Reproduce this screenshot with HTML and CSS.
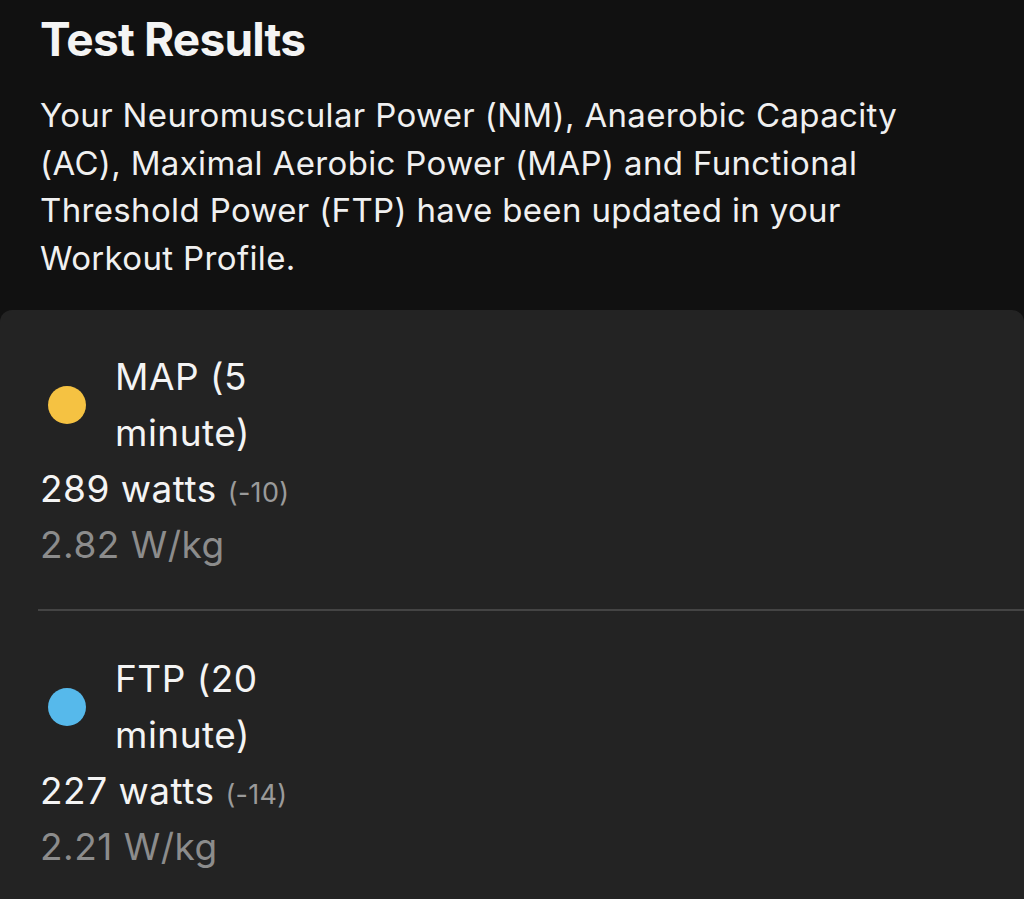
FILE: index.html
```html
<!DOCTYPE html>
<html>
<head>
<meta charset="utf-8">
<link rel="stylesheet" href="styles.css">
</head>
<body>
<header class="intro">
  <h1 class="title">Test Results</h1>
  <p class="desc">Your Neuromuscular Power (NM), Anaerobic Capacity (AC), Maximal Aerobic Power (MAP) and Functional Threshold Power (FTP) have been updated in your Workout Profile.</p>
</header>
<section class="card">
  <div class="item">
    <div class="head">
      <span class="dot dot-map"></span>
      <span class="name">MAP (5 minute)</span>
    </div>
    <div class="watts">289 watts <span class="delta">(-10)</span></div>
    <div class="wkg">2.82 W/kg</div>
  </div>
  <div class="item">
    <div class="head">
      <span class="dot dot-ftp"></span>
      <span class="name">FTP (20 minute)</span>
    </div>
    <div class="watts">227 watts <span class="delta">(-14)</span></div>
    <div class="wkg">2.21 W/kg</div>
  </div>
</section>
</body>
</html>
```
FILE: styles.css
```css
html, body {
  margin: 0;
  padding: 0;
  background: #111111;
  height: 100%;
}
body {
  font-family: Inter, "Noto Sans", sans-serif;
  color: #f2f2f2;
  overflow: hidden;
}
.intro {
  padding: 13px 40px 28px 40px;
}
.title {
  margin: 0;
  font-size: 46px;
  font-weight: 700;
  line-height: 52px;
  letter-spacing: -0.8px;
  color: #f4f4f4;
}
.desc {
  margin: 27px 0 0 0;
  font-size: 33px;
  line-height: 47.5px;
  letter-spacing: 0.35px;
  color: #f0f0f0;
  max-width: 900px;
}
.card {
  background: #232323;
  border-radius: 12px 12px 0 0;
  min-height: 600px;
  padding: 0 0 0 38px;
}
.item {
  padding: 39px 0 38px 2px;
}
.item + .item {
  border-top: 2px solid #444444;
  padding-top: 40px;
}
.head {
  display: flex;
  align-items: center;
  gap: 29px;
  padding-left: 8px;
}
.dot {
  width: 38px;
  height: 38px;
  border-radius: 50%;
  flex: none;
}
.dot-map { background: #f5c242; }
.dot-ftp { background: #56b9eb; }
.name {
  width: 150px;
  font-size: 37px;
  line-height: 56px;
  letter-spacing: 0.5px;
  color: #f4f4f4;
}
.watts {
  margin-top: 2px;
  font-size: 37px;
  line-height: 52px;
  letter-spacing: 0.5px;
  color: #f4f4f4;
}
.delta {
  font-size: 27px;
  letter-spacing: 0.3px;
  color: #9a9a9a;
}
.wkg {
  font-size: 37px;
  line-height: 52px;
  letter-spacing: 0.5px;
  color: #8c8c8c;
}
```
